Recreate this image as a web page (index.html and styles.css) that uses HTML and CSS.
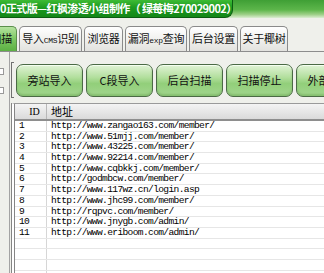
FILE: index.html
```html
<!DOCTYPE html>
<html>
<head>
  <meta charset="utf-8">
  <title>后台扫描</title>
  <link rel="stylesheet" href="styles.css">
</head>
<body>
  <div class="titlebar">
    <div class="title">0正式版—红枫渗透小组制作（ 绿莓梅270029002）</div>
  </div>

  <div class="tabs">
    <div class="tab active">扫描</div>
    <div class="tab t2">导入<span class="latin">CMS</span>识别</div>
    <div class="tab t3">浏览器</div>
    <div class="tab t4">漏洞<span class="latin">exp</span>查询</div>
    <div class="tab t5">后台设置</div>
    <div class="tab t6">关于椰树</div>
  </div>

  <div class="main">
    <div class="side">
      <div class="stub"></div>
      <div class="stub low"></div>
    </div>
    <div class="panel">
      <div class="toolbar">
        <div class="bracket"></div>
        <button class="btn">旁站导入</button>
        <button class="btn">C段导入</button>
        <button class="btn">后台扫描</button>
        <button class="btn">扫描停止</button>
        <button class="btn">外部导入</button>
      </div>

      <div class="grid">
        <div class="row head">
          <div class="cell id">ID</div>
          <div class="cell url">地址</div>
        </div>
        <div class="row"><div class="cell id">1</div><div class="cell url">http://www.zangao163.com/member/</div></div>
        <div class="row"><div class="cell id">2</div><div class="cell url">http://www.51mjj.com/member/</div></div>
        <div class="row"><div class="cell id">3</div><div class="cell url">http://www.43225.com/member/</div></div>
        <div class="row"><div class="cell id">4</div><div class="cell url">http://www.92214.com/member/</div></div>
        <div class="row"><div class="cell id">5</div><div class="cell url">http://www.cqbkkj.com/member/</div></div>
        <div class="row"><div class="cell id">6</div><div class="cell url">http://godmbcw.com/member/</div></div>
        <div class="row"><div class="cell id">7</div><div class="cell url">http://www.117wz.cn/login.asp</div></div>
        <div class="row"><div class="cell id">8</div><div class="cell url">http://www.jhc99.com/member/</div></div>
        <div class="row"><div class="cell id">9</div><div class="cell url">http://rqpvc.com/member/</div></div>
        <div class="row"><div class="cell id">10</div><div class="cell url">http://www.jnygb.com/admin/</div></div>
        <div class="row"><div class="cell id">11</div><div class="cell url">http://www.eriboom.com/admin/</div></div>
        <div class="row"><div class="cell id"></div><div class="cell url"></div></div>
        <div class="row"><div class="cell id"></div><div class="cell url"></div></div>
        <div class="row"><div class="cell id"></div><div class="cell url"></div></div>
        <div class="row"><div class="cell id"></div><div class="cell url"></div></div>
      </div>
    </div>
  </div>
</body>
</html>
```

FILE: styles.css
```css
body {
    margin: 0;
    width: 324px;
    height: 273px;
    overflow: hidden;
    background-color: #eff0eb;
    font-family: "Noto Sans CJK SC", "DejaVu Sans", sans-serif;
    font-size: 11px;
    color: #111;
}

/* title bar */
.titlebar {
    display: flex;
    height: 18px;
    background: linear-gradient(#3f9f35 0%, #5db64b 55%, #9ccf86 80%, #dcedd3 100%);
}
.title {
    width: 233px;
    height: 18px;
    box-sizing: border-box;
    background: linear-gradient(#3dbb35 0%, #1c9a1f 45%, #138717 100%);
    border-right: 1px solid #0b5c12;
    border-bottom: 1px solid #0b5c12;
    border-bottom-right-radius: 8px;
    color: #fff;
    font-weight: bold;
    font-size: 11px;
    line-height: 16px;
    letter-spacing: -0.6px;
    white-space: nowrap;
    overflow: hidden;
}

/* tabs */
.tabs {
    display: flex;
    align-items: flex-end;
    gap: 2px;
    height: 26px;
    margin-top: 7px;
    border-bottom: 1px solid #8d8d8d;
}
.tab {
    height: 25px;
    box-sizing: border-box;
    border: 1px solid #8a8a8a;
    border-bottom: none;
    border-radius: 5px 5px 0 0;
    background: linear-gradient(#ffffff, #e2e2de);
    text-align: center;
    line-height: 23px;
    font-size: 11px;
    letter-spacing: -0.3px;
    white-space: nowrap;
}
.tab.active {
    width: 31px;
    margin-left: -14px;
    text-align: right;
    padding-right: 4px;
    background: linear-gradient(#b6e3a0 0%, #7cc762 50%, #5cb043 100%);
    border-color: #5b8f4c;
}
.t2 { width: 63px; }
.t3 { width: 39px; }
.t4 { width: 62px; }
.t5 { width: 49px; }
.t6 { width: 48px; }
.latin {
    font-family: "Liberation Mono", monospace;
    font-size: 8px;
}

/* body area */
.main {
    display: flex;
    height: 221px;
}
.side {
    width: 9px;
    flex-shrink: 0;
    border-right: 1px solid #a3a3a3;
}
.stub {
    width: 3px;
    height: 5px;
    margin-top: 16px;
    background-color: #fff;
    border: 1px solid #999;
    border-left: none;
}
.stub.low {
    margin-top: 12px;
}
.panel {
    flex: 1;
    display: flex;
    flex-direction: column;
    padding-left: 1px;
}

/* buttons */
.toolbar {
    display: flex;
    align-items: center;
    gap: 3px;
    margin-top: 10px;
    height: 36px;
}
.bracket {
    width: 2px;
    height: 34px;
    margin-right: -1px;
    border: 1px solid #707070;
    border-right: none;
    flex-shrink: 0;
}
.btn {
    width: 67px;
    height: 33px;
    flex-shrink: 0;
    border: 1px solid #4b6a45;
    border-radius: 7px;
    background: linear-gradient(#e1f3d6 0%, #b2df9d 40%, #92cf7a 60%, #a2d58e 100%);
    box-shadow: inset 0 1px 0 #f4fff0, inset 0 -2px 2px #86bf70;
    font-family: "Noto Sans CJK SC", sans-serif;
    font-size: 11px;
    color: #111;
    padding: 0;
}

/* list */
.grid {
    margin-top: 5px;
    flex: 1;
    background-color: #fff;
    border-left: 4px double #858585;
    border-top: 1px solid #9a9a9a;
}
.row {
    display: flex;
    height: 10.7px;
    box-sizing: border-box;
    border-bottom: 1px solid #e6e6e6;
    font-family: "Liberation Mono", monospace;
    font-size: 9.6px;
    letter-spacing: -0.65px;
    line-height: 10px;
    color: #000;
}
.row.head {
    height: 17px;
    background: linear-gradient(#f4f4f4, #dadada);
    border-bottom: 2px solid #8e8e8e;
    font-family: "Liberation Serif", serif;
    font-size: 10px;
    letter-spacing: 0;
    line-height: 15px;
}
.cell {
    box-sizing: border-box;
    white-space: nowrap;
    overflow: hidden;
}
.cell.id {
    width: 32px;
    flex-shrink: 0;
    padding-left: 4px;
    border-right: 1px solid #d6d6d6;
}
.head .cell.id {
    text-align: center;
    padding-left: 8px;
    border-right-color: #b8b8b8;
}
.cell.url {
    flex: 1;
    padding-left: 4px;
}
.head .cell.url {
    font-family: "Noto Sans CJK SC", sans-serif;
    font-size: 11px;
}
```
